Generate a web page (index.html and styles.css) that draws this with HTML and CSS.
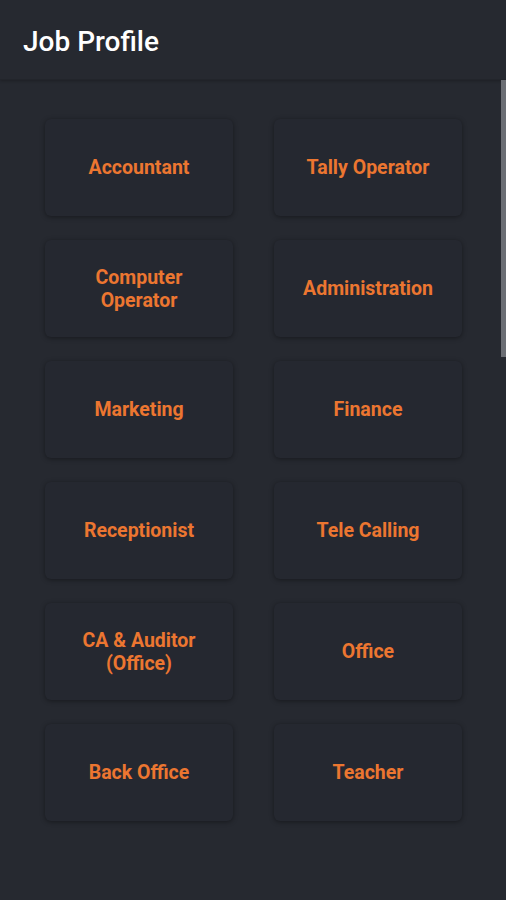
FILE: index.html
```html
<!DOCTYPE html>
<html lang="en">
<head>
    <meta charset="UTF-8">
    <meta name="viewport" content="width=device-width, initial-scale=1.0">
    <title>Job Profile</title>
    <link rel="stylesheet" href="styles.css">
</head>
<body>
    <div class="app">
        <header class="toolbar">Job Profile</header>
        <main class="content">
            <div class="grid">
                <button class="job">Accountant</button>
                <button class="job">Tally Operator</button>
                <button class="job">Computer<br>Operator</button>
                <button class="job">Administration</button>
                <button class="job">Marketing</button>
                <button class="job">Finance</button>
                <button class="job">Receptionist</button>
                <button class="job">Tele Calling</button>
                <button class="job">CA &amp; Auditor<br>(Office)</button>
                <button class="job">Office</button>
                <button class="job">Back Office</button>
                <button class="job">Teacher</button>
            </div>
            <!-- scroll indicator -->
            <div class="scroll-thumb"></div>
        </main>
    </div>
</body>
</html>
```
FILE: styles.css
```css
body, html {
    margin: 0;
    height: 100%;
    background-color: #262930;
    font-family: Roboto, "Liberation Sans", sans-serif;
}
.app {
    height: 900px;
    display: flex;
    flex-direction: column;
}
.toolbar {
    height: 80px;
    box-sizing: border-box;
    padding: 3px 0 0 23px;
    display: flex;
    align-items: center;
    color: #ffffff;
    font-size: 28px;
    font-weight: 500;
    border-bottom: 1px solid #22252b;
    box-shadow: 0 1px 3px rgba(0, 0, 0, 0.25);
}
.content {
    position: relative;
    flex: 1;
}
.grid {
    display: grid;
    grid-template-columns: repeat(2, 188px);
    grid-auto-rows: 97px;
    column-gap: 41px;
    row-gap: 24px;
    padding: 39px 0 0 45px;
}
.job {
    border: none;
    border-radius: 6px;
    background-color: #252830;
    box-shadow: 0 1px 5px rgba(0, 0, 0, 0.4);
    color: #ec7630;
    font-family: Roboto, "Liberation Sans", sans-serif;
    font-size: 19.5px;
    font-weight: 700;
    line-height: 23px;
    text-align: center;
    padding: 0 6px;
    cursor: pointer;
}
.scroll-thumb {
    position: absolute;
    top: 0;
    right: 0;
    width: 5px;
    height: 277px;
    background-color: #6b6e74;
}
```
